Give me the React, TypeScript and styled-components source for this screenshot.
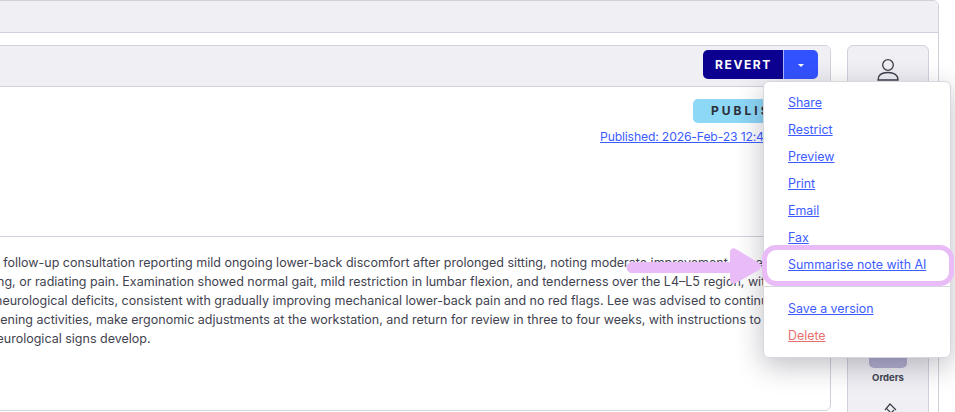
import styled, { createGlobalStyle } from 'styled-components';

const GlobalStyle = createGlobalStyle`
  html, body {
    margin: 0;
    padding: 0;
    background: #fff;
  }
  body {
    font-family: Inter, "Open Sans", "Liberation Sans", sans-serif;
    color: #3b3f4a;
  }
`
const Page = styled.div`
  position: relative;
  width: 955px;
  height: 412px;
  overflow: hidden;
  background: #fff;
`
const Shell = styled.div`
  width: 1000px;
  height: 440px;
  margin-left: -61px;
  box-sizing: border-box;
  border: 1px solid #ced2da;
  border-radius: 0 6px 0 0;
`
const ShellBar = styled.div`
  height: 31px;
  background: #f0eff4;
  border-bottom: 1px solid #ced2da;
  border-radius: 0 6px 0 0;
`
const ShellBody = styled.div`
  display: flex;
  gap: 16px;
  padding: 12px 9px 0 0;
`
const Note = styled.div`
  width: 891px;
  height: 366px;
  box-sizing: border-box;
  border: 1px solid #ced2da;
  border-radius: 0 6px 6px 0;
  display: flex;
  flex-direction: column;
  overflow: hidden;
`
const NoteBar = styled.div`
  height: 41px;
  flex: none;
  box-sizing: border-box;
  background: #f0eff4;
  border-bottom: 1px solid #ced2da;
  display: flex;
  justify-content: flex-end;
  padding: 4px 12px 0 0;
`
const SplitButton = styled.div`
  display: flex;
  height: 29px;
  border-radius: 5px;
  overflow: hidden;
`
const RevertButton = styled.button`
  width: 80px;
  border: 0;
  padding: 0 0 0 1px;
  background: #0c0091;
  color: #fff;
  font: 700 12px Inter, sans-serif;
  letter-spacing: 1.6px;
`
const CaretButton = styled.button`
  width: 35px;
  border: 0;
  border-left: 1px solid #a9b6ff;
  padding: 0;
  background: #3352ff;
  display: flex;
  align-items: center;
  justify-content: center;
`
const Caret = styled.span`
  width: 0;
  height: 0;
  margin-top: 1px;
  border-left: 3px solid transparent;
  border-right: 3px solid transparent;
  border-top: 3px solid #fff;
`
const NoteMeta = styled.div`
  height: 150px;
  flex: none;
  box-sizing: border-box;
  border-bottom: 1px solid #ced2da;
  padding: 12px 0 0 752px;
`
const Badge = styled.div`
  width: 130px;
  height: 24px;
  border-radius: 5px;
  background: #8dd7f7;
  color: #2c2f38;
  font-size: 12px;
  font-weight: 700;
  letter-spacing: 3px;
  line-height: 24px;
  padding-left: 18px;
  box-sizing: border-box;
`
const PublishedLink = styled.a`
  display: block;
  margin: 6px 0 0 -93px;
  color: #3d5cff;
  font-size: 12.2px;
  letter-spacing: -0.15px;
  line-height: 16px;
  text-decoration: underline;
  white-space: nowrap;
`
const NoteText = styled.div`
  padding-top: 16px;
  font-size: 12.5px;
  line-height: 19px;
  color: #3f4350;
`
const NoteLine = styled.div<{ $shift: number }>`
  margin-left: ${props => props.$shift}px;
  white-space: nowrap;
`
const SideRail = styled.div`
  width: 82px;
  height: 400px;
  flex: none;
  box-sizing: border-box;
  background: #f0eff4;
  border: 1px solid #ced2da;
  border-radius: 6px 6px 0 0;
  display: flex;
  flex-direction: column;
  align-items: center;
`
const RailUser = styled.div`
  height: 22px;
  margin-top: 13px;
  color: #3b3f4a;
`
const OrdersTile = styled.div`
  width: 38px;
  height: 24px;
  margin-top: 263px;
  border-radius: 0 0 5px 5px;
  background: #b2afd0;
`
const RailLabel = styled.div`
  margin-top: 4px;
  font-size: 9.5px;
  font-weight: 700;
  color: #3f4350;
`
const RailIcon = styled.div`
  margin: 18px 0 0 6px;
  color: #3b3f4a;
`
const Menu = styled.div`
  position: absolute;
  left: 763px;
  top: 81px;
  width: 188px;
  height: 277px;
  box-sizing: border-box;
  padding-top: 7px;
  background: #fff;
  border: 1px solid #d6d8de;
  border-radius: 6px;
  box-shadow: 0 8px 28px rgba(30, 30, 50, 0.28);
`
const MenuItem = styled.a<{ $danger?: boolean }>`
  display: block;
  height: 27px;
  padding-left: 24px;
  color: ${props => (props.$danger ? '#e66f6f' : '#3d5cff')};
  font-size: 12.4px;
  line-height: 27px;
  text-decoration: underline;
`
const MenuDivider = styled.div`
  height: 1px;
  margin: 8px 0;
  background: #d6d8de;
`
const Highlight = styled.div`
  position: absolute;
  left: 762px;
  top: 245px;
  width: 192px;
  height: 41px;
  box-sizing: border-box;
  border: 5px solid #e9bcf8;
  border-radius: 14px;
`
const Arrow = styled.svg`
  position: absolute;
  left: 626px;
  top: 248px;
`

const noteLines = [
  { shift: -29, text: 'Lee attended a follow-up consultation reporting mild ongoing lower-back discomfort after prolonged sitting, noting moderate improvement since the last visit' },
  { shift: -61, text: 'No numbness, tingling, or radiating pain. Examination showed normal gait, mild restriction in lumbar flexion, and tenderness over the L4–L5 region, with no' },
  { shift: -35, text: 'There were no neurological deficits, consistent with gradually improving mechanical lower-back pain and no red flags. Lee was advised to continue the' },
  { shift: -30, text: 'gentle strengthening activities, make ergonomic adjustments at the workstation, and return for review in three to four weeks, with instructions to seek care' },
  { shift: -16, text: 'if any new neurological signs develop.' },
]

const menuTop = ['Share', 'Restrict', 'Preview', 'Print', 'Email', 'Fax', 'Summarise note with AI']

function App() {
  return (
    <Page>
      <GlobalStyle />
      <Shell>
        <ShellBar />
        <ShellBody>
          <Note>
            <NoteBar>
              <SplitButton>
                <RevertButton>REVERT</RevertButton>
                <CaretButton><Caret /></CaretButton>
              </SplitButton>
            </NoteBar>
            <NoteMeta>
              <Badge>PUBLISHED</Badge>
              <PublishedLink>Published: 2026-Feb-23 12:48</PublishedLink>
            </NoteMeta>
            <NoteText>
              {noteLines.map(line => <NoteLine key={line.text} $shift={line.shift}>{line.text}</NoteLine>)}
            </NoteText>
          </Note>
          <SideRail>
            <RailUser>
              <svg width="22" height="22" viewBox="0 0 22 22" fill="none" stroke="currentColor" strokeWidth="1.3">
                <circle cx="11" cy="6" r="5.300" />
                <path d="M1 21c0-5 4-7.500 10-7.500s10 2.500 10 7.500z" />
              </svg>
            </RailUser>
            <OrdersTile />
            <RailLabel>Orders</RailLabel>
            <RailIcon>
              <svg width="14" height="14" viewBox="0 0 14 14" fill="none" stroke="currentColor" strokeWidth="1.2">
                <path d="M1 7l5-6 6 6M3 6l4 4 3-3" />
              </svg>
            </RailIcon>
          </SideRail>
        </ShellBody>
      </Shell>
      <Menu>
        {menuTop.map(item => <MenuItem key={item}>{item}</MenuItem>)}
        <MenuDivider />
        <MenuItem>Save a version</MenuItem>
        <MenuItem $danger>Delete</MenuItem>
      </Menu>
      <Highlight />
      <Arrow width="140" height="40" viewBox="0 0 140 40">
        <path d="M6 14h98V4c0-3 3-5 6-3l23 14c3 2 3 5 0 7l-23 13c-3 2-6 0-6-3V25H6a5.500 5.500 0 0 1 0-11z" fill="#e9bcf8" />
      </Arrow>
    </Page>
  )
}
export default App;
